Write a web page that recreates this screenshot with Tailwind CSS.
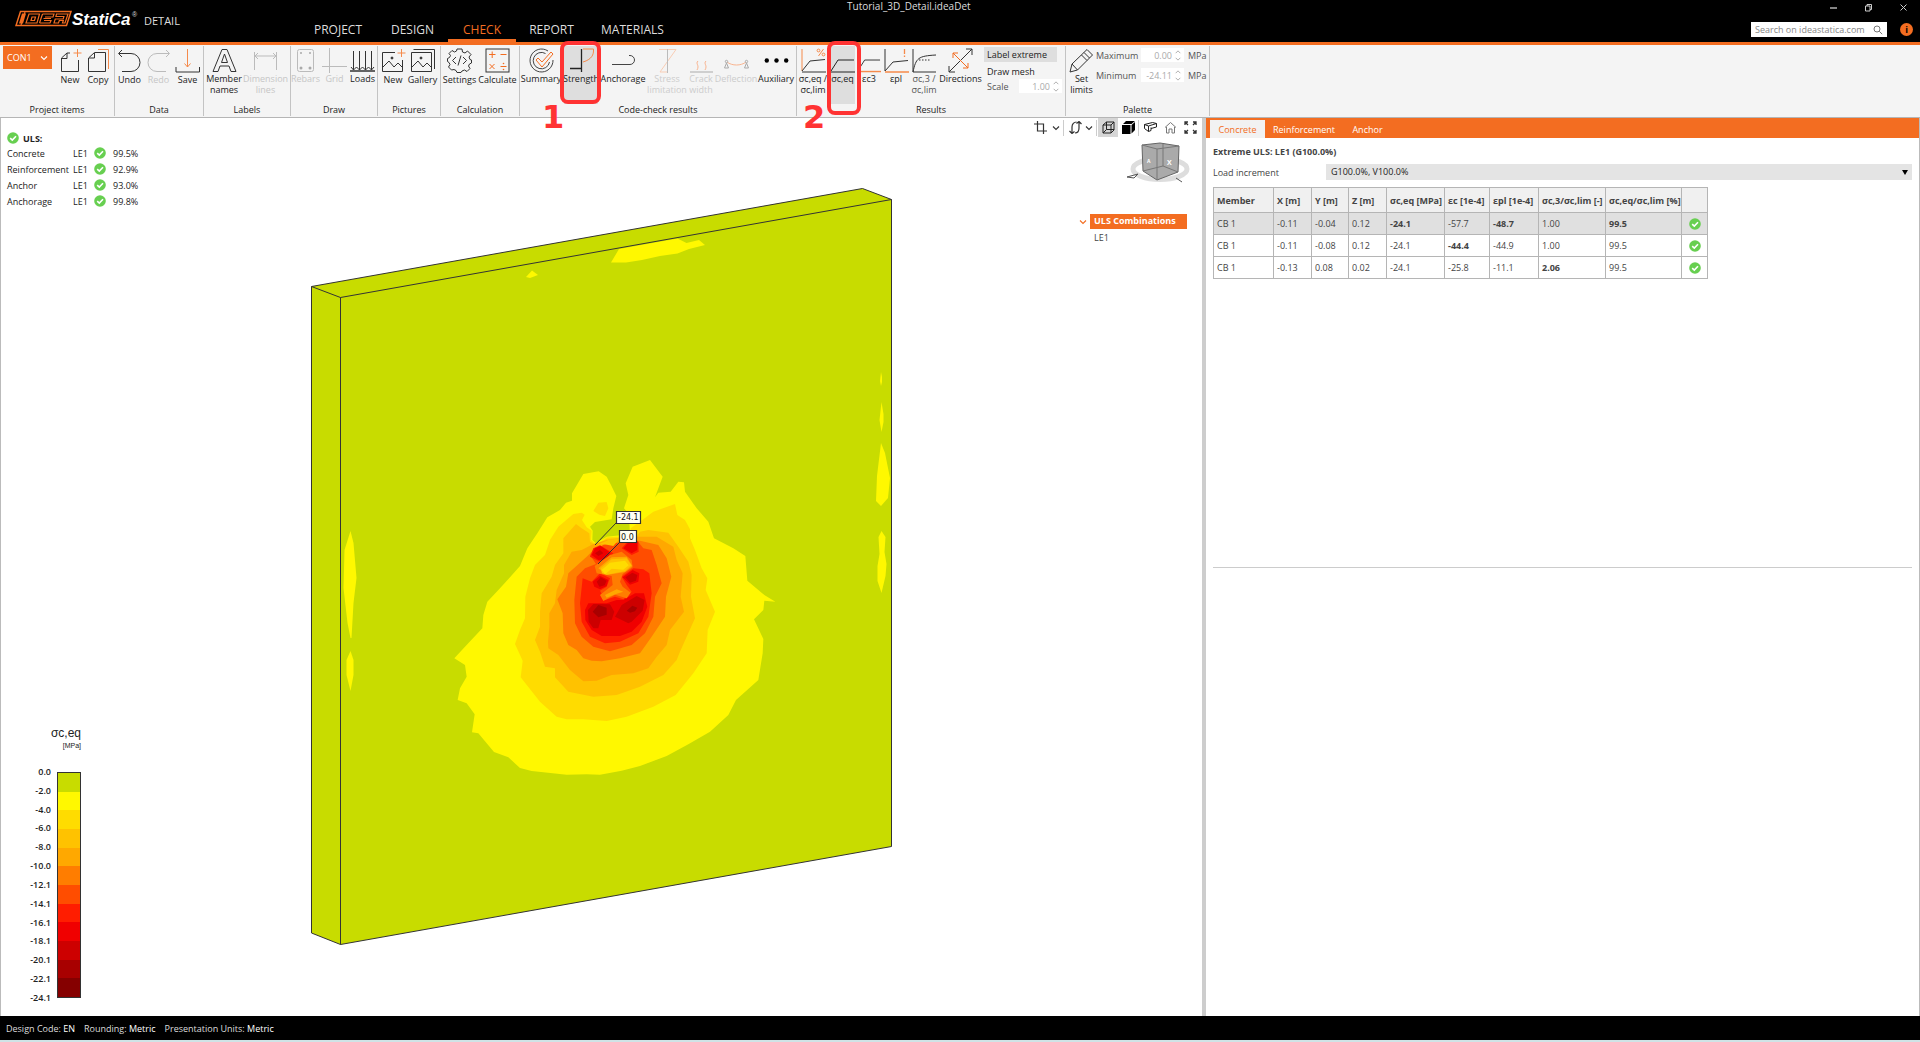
<!DOCTYPE html>
<html lang="en">
<head>
<meta charset="utf-8">
<meta name="viewport" content="width=device-width, initial-scale=1">
<title>Tutorial_3D_Detail.ideaDet</title>
<script src="https://cdn.jsdelivr.net/npm/@tailwindcss/browser@4"></script>
</head>
<body class="relative flex min-h-screen flex-col bg-[#cfe3e6] font-['Open_Sans','Noto_Sans',sans-serif] text-[9px] leading-[11px] text-[#222]">

<svg class="hidden" aria-hidden="true">
  <symbol id="ok" viewBox="0 0 12 12"><circle cx="6" cy="6" r="5.8" fill="#67cf50"/><path d="M3.2 6.2 5.3 8.1 9 4.2" fill="none" stroke="#fff" stroke-width="1.6"/></symbol>
  <symbol id="down" viewBox="0 0 8 8"><path d="M1 2.5 4 5.5 7 2.5" fill="none" stroke="currentColor" stroke-width="1.1"/></symbol>
  <symbol id="spin" viewBox="0 0 8 14"><path d="M1.5 4.5 4 2l2.5 2.5M1.5 9.5 4 12l2.5-2.5" fill="none" stroke="#aaa"/></symbol>
</svg>

<!-- Title bar and main tabs -->
<header class="flex h-[45px] shrink-0 border-b-[3px] border-[#f36d21] bg-black text-[#ddd]">
  <div class="flex items-end">
    <div class="flex h-full w-[299px] items-start pt-[10px] pl-[15px]">
      <svg class="h-[18px] w-[124px]" viewBox="0 0 124 18" role="img" aria-label="IDEA StatiCa">
        <path d="M5.5 1.500H56L51.500 15.500H1z" fill="#000" stroke="#f36d21" stroke-width="1.500"/>
        <g fill="none" stroke="#f36d21" stroke-width="1.200">
          <path d="M7 3.500h4L8 13.500H4z" fill="#f36d21" stroke="none"/>
          <path d="M10 2 6 15"/>
          <path d="M14 4H24.500L22 13H11zM17 7h3.500l-1 3.500H16z"/>
          <path d="M27.500 4H39l-1 3h-8M28.500 8.500H36M24.500 13h10.500l1-2.500h-7M27.500 4l-3 9"/>
          <path d="M41.500 4H53L50 13h-2.500l.8-2.500h-4l-.8 2.500H39l1.200-4h8l.7-2.500h-8z"/>
        </g>
        <text x="57" y="15" fill="#fff" font-family="Liberation Sans, sans-serif" font-size="17" font-weight="700" font-style="italic">StatiCa</text>
        <text x="117" y="7" fill="#ddd" font-family="Liberation Sans, sans-serif" font-size="7">®</text>
      </svg>
      <span class="pl-[5px] pt-[4px] text-[11px] leading-[14px]">DETAIL</span>
    </div>
    <nav class="flex text-center text-[12px] leading-[16px]">
      <a href="#" class="w-[78px] pb-1">PROJECT</a>
      <a href="#" class="w-[71px] pb-1">DESIGN</a>
      <a href="#" class="w-[68px] border-b-[3px] border-[#f36d21] pb-px text-[#f36d21]">CHECK</a>
      <a href="#" class="w-[71px] pb-1">REPORT</a>
      <a href="#" class="w-[91px] pb-1">MATERIALS</a>
    </nav>
  </div>
  <h1 class="flex-1 pl-[169px] text-[10px] leading-[13px]">Tutorial_3D_Detail.ideaDet</h1>
  <div class="flex flex-col items-end">
    <div class="flex h-[14px] items-center gap-[26px] pr-[12px]">
      <button aria-label="Minimize"><svg class="h-[9px] w-[9px]" viewBox="0 0 9 9"><path d="M1 5h7" stroke="#ccc" stroke-width="1.300"/></svg></button>
      <button aria-label="Restore"><svg class="h-[9px] w-[9px]" viewBox="0 0 9 9" fill="none" stroke="#ccc"><path d="M1.500 3h4.500v5H1.500zM3 3V1.500h4.500v5H6"/></svg></button>
      <button aria-label="Close"><svg class="h-[9px] w-[9px]" viewBox="0 0 9 9"><path d="m1.500 1.500 6 6m0-6-6 6" stroke="#ccc"/></svg></button>
    </div>
    <div class="flex items-center gap-[13px] pt-[8px] pr-[7px]">
      <label class="flex h-[15px] w-[136px] items-center bg-white px-1">
        <input class="w-full bg-transparent text-[9px] leading-[11px] text-[#555] outline-none placeholder:text-[#888]" placeholder="Search on ideastatica.com" aria-label="Search on ideastatica.com">
        <svg class="h-[10px] w-[10px] shrink-0" viewBox="0 0 10 10" fill="none" stroke="#777"><circle cx="4" cy="4" r="3"/><path d="m6.200 6.200 3 3"/></svg>
      </label>
      <button aria-label="Info" class="h-[13px] w-[13px] rounded-full bg-[#f36d21] text-[9px] font-bold leading-[13px] text-black">i</button>
    </div>
  </div>
</header>

<!-- Ribbon -->
<div class="flex h-[73px] shrink-0 border-b border-[#b5b5b5] bg-[#f4f4f4] text-center whitespace-nowrap">

  <section class="my-px flex w-[115px] shrink-0 flex-col border-r border-[#c3c3c3]">
    <div class="flex flex-1 pl-[3px]">
      <button class="mr-1 flex h-[23px] w-[49px] items-center justify-between bg-[#f36d21] px-1 text-white">CON1 <svg class="h-2 w-2"><use href="#down"/></svg></button>
      <button class="flex w-7 flex-col items-center pt-[2px]"><svg class="mb-px h-[25px] w-[25px]" viewBox="0 0 25 25" fill="none" stroke="#333"><path d="M20.500 12v11.500h-17V10L9 5v5.500H4M9 5h3"/><path d="M19.500 1v8M15.500 5h8" stroke="#f58a4b"/></svg>New</button>
      <button class="flex w-7 flex-col items-center pt-[2px]"><svg class="mb-px h-[25px] w-[25px]" viewBox="0 0 25 25" fill="none" stroke="#333"><path d="M9 4.500h10.500v19h-17V10L8.500 4.500V10H3"/><path d="M12 1.500h10.500V21" stroke="#f58a4b"/></svg>Copy</button>
    </div>
    <h2 class="pb-px">Project items</h2>
  </section>

  <section class="my-px flex w-[89px] shrink-0 flex-col border-r border-[#c3c3c3]">
    <div class="flex flex-1">
      <button class="flex w-[29px] flex-col items-center pt-[2px]"><svg class="mb-px h-[25px] w-[25px]" viewBox="0 0 25 25" fill="none" stroke="#333"><path d="M5 2 1.500 5.500 5 9M2 5.500h12a9 9 0 0 1 0 18H5"/></svg>Undo</button>
      <button disabled class="flex w-[29px] flex-col items-center pt-[2px] text-[#c6c6c6]"><svg class="mb-px h-[25px] w-[25px]" viewBox="0 0 25 25" fill="none" stroke="#bbb"><path d="m20 2 3.500 3.500L20 9M23 5.500H11a9 9 0 0 0 0 18h9"/></svg>Redo</button>
      <button class="flex w-[29px] flex-col items-center pt-[2px]"><svg class="mb-px h-[25px] w-[25px]" viewBox="0 0 25 25" fill="none" stroke="#333"><path d="M1 19v5h23.500v-5"/><path d="M12.500 1v18M9.500 15.500l3 3.500 3-3.500" stroke="#f58a4b"/></svg>Save</button>
    </div>
    <h2 class="pb-px">Data</h2>
  </section>

  <section class="my-px flex w-[87px] shrink-0 flex-col border-r border-[#c3c3c3]">
    <div class="flex flex-1">
      <button class="flex w-10 flex-col items-center pt-[2px]"><svg class="h-[25px] w-[25px]" viewBox="0 0 25 25" fill="none" stroke="#333"><path d="M1 23.500 10 1.500h5l9 22h-5l-2-5.500H8l-2 5.500zM9.500 14.500h6L12.500 6z"/></svg>Member<br>names</button>
      <button disabled class="flex w-[43px] flex-col items-center pt-[2px] text-[#c6c6c6]"><svg class="h-[25px] w-[25px]" viewBox="0 0 25 25" fill="none" stroke="#bbb"><path d="M1.500 4v18M23.500 4v18M2 8h21M5 5 2 8l3 3M20 5l3 3-3 3"/></svg>Dimension<br>lines</button>
    </div>
    <h2 class="pb-px">Labels</h2>
  </section>

  <section class="my-px flex w-[87px] shrink-0 flex-col border-r border-[#c3c3c3]">
    <div class="flex flex-1">
      <button disabled class="flex w-[29px] flex-col items-center pt-[2px] text-[#c6c6c6]"><svg class="h-[25px] w-[25px]" viewBox="0 0 25 25" fill="none" stroke="#bbb"><rect x="4.500" y="1.500" width="16" height="22" rx="2"/><g fill="#aaa" stroke="none"><circle cx="8" cy="5" r="1"/><circle cx="17" cy="5" r="1"/><circle cx="8" cy="20" r="1.500"/><circle cx="17" cy="20" r="1.500"/></g></svg>Rebars</button>
      <button disabled class="flex w-[29px] flex-col items-center pt-[2px] text-[#c6c6c6]"><svg class="h-[25px] w-[25px]" viewBox="0 0 25 25" stroke="#bbb"><path d="M7.500 0v25M0 18.500h25"/></svg>Grid</button>
      <button class="flex w-[27px] flex-col items-center pt-[2px]"><svg class="h-[25px] w-[25px]" viewBox="0 0 25 25" fill="none" stroke="#333"><path d="M3.500 3v19M9.500 3v19M15.500 3v19M21.500 3v19M1 19l2.500 3 3-3 3 3 3-3 3 3 3-3 3 3 2.500-3"/><path d="M0 23h25" stroke-width="1.500"/></svg>Loads</button>
    </div>
    <h2 class="pb-px">Draw</h2>
  </section>

  <section class="my-px flex w-[63px] shrink-0 flex-col border-r border-[#c3c3c3]">
    <div class="flex flex-1">
      <button class="flex w-[30px] flex-col items-center pt-[2px]"><svg class="mb-px h-[25px] w-[25px]" viewBox="0 0 25 25" fill="none" stroke="#333"><path d="M14 4.500H1.500v19h20V12M2 19l6-6 5 6 4-4 4 4"/><circle cx="11" cy="10" r="1" fill="#333"/><path d="M20.500 1v8M16.500 5h8" stroke="#f58a4b"/></svg>New</button>
      <button class="flex w-[29px] flex-col items-center pt-[2px]"><svg class="mb-px h-[25px] w-[25px]" viewBox="0 0 25 25" fill="none" stroke="#333"><path d="M1.500 4.500h20v19h-20zM3.500 1.500h21V21M2 19l6-6 5 6 4-4 4 4"/><circle cx="11" cy="10" r="1" fill="#333"/></svg>Gallery</button>
    </div>
    <h2 class="pb-px">Pictures</h2>
  </section>

  <section class="my-px flex w-[79px] shrink-0 flex-col border-r border-[#c3c3c3]">
    <div class="flex flex-1">
      <button class="flex w-[37px] flex-col items-center pt-[2px]"><svg class="mb-px h-[25px] w-[25px]" viewBox="0 0 25 25" fill="none" stroke="#333"><path d="M10 1h5l.5 3 2.500 1 2.500-2L24 6.500l-2 2.500 1 2.500 1.500.5v3l-2 1-1 2 1.500 2.500-3 3-2.500-1.500-2.500 1-1 1.500h-4l-1-2-2-1L4.500 22l-3-3L3 16.500l-1-2-1.500-1v-3l2-1 1-2L2 5.500l3-3 2.500 1.500L9.500 3z"/><path d="M9 9 5.500 12.500 9 16M16 9l3.500 3.500L16 16M14 7.500l-3 10"/></svg>Settings</button>
      <button class="flex w-[39px] flex-col items-center pt-[2px]"><svg class="mb-px h-[25px] w-[25px]" viewBox="0 0 25 25" fill="none" stroke="#333"><rect x="1" y="1" width="23" height="23"/><path d="M4 6.500h6.500M7.200 3.500v6.500M15.500 6.500h6M4.500 16l5 5m0-5-5 5M15.500 18.500h6" stroke="#f36d21"/><circle cx="18.500" cy="15.500" r=".8" fill="#f36d21" stroke="none"/><circle cx="18.500" cy="21.500" r=".8" fill="#f36d21" stroke="none"/></svg>Calculate</button>
    </div>
    <h2 class="pb-px">Calculation</h2>
  </section>

  <section class="my-px flex w-[277px] shrink-0 flex-col border-r border-[#c3c3c3]">
    <div class="flex flex-1 gap-[2px]">
      <button class="flex w-[42px] flex-col items-center pt-[2px]"><svg class="h-[25px] w-[25px]" viewBox="0 0 25 25" fill="none" stroke="#444"><path d="M19 3A11.500 11.500 0 1 0 24 12M16.500 5.500A8.200 8.200 0 1 0 20.500 14"/><path d="m7 12 2-2 4 4 9-10 2 2-11 13z" stroke="#f36d21"/></svg>Summary</button>
      <button class="flex w-[34px] flex-col items-center bg-[#dedede] pt-[2px]"><svg class="h-[25px] w-[25px]" viewBox="0 0 25 25" fill="none" stroke="#222"><path d="M14 1h10.500v2c0 6-5 9.500-10.500 11" stroke="#f58a4b"/><path d="M12.500 1v23M1 20.500h11.500" stroke-width="1.300"/></svg>Strength</button>
      <button class="flex w-[46px] flex-col items-center pt-[2px]"><svg class="h-[25px] w-[25px]" viewBox="0 0 25 25" fill="none" stroke="#444"><path d="M1 16.500h18a4.500 4.500 0 0 0 0-9h-1"/></svg>Anchorage</button>
      <button disabled class="flex w-[38px] flex-col items-center pt-[2px] text-[#ccc]"><svg class="h-[25px] w-[25px]" viewBox="0 0 25 25" fill="none"><path d="M4 1.500h17L5 24h7" stroke="#f9cdb4"/><path d="M12.500 1v24" stroke="#bbb"/></svg>Stress<br>limitation</button>
      <button disabled class="flex w-[26px] flex-col items-center pt-[2px] text-[#ccc]"><svg class="h-[25px] w-[25px]" viewBox="0 0 25 25" fill="none"><path d="M9 13c-3 3 2 4-1 9M17 13c-3 3 2 4-1 9" stroke="#f9b48f"/><path d="M1 24h23" stroke="#aaa"/></svg>Crack<br>width</button>
      <button disabled class="flex w-10 flex-col items-center pt-[2px] text-[#ccc]"><svg class="h-[25px] w-[25px]" viewBox="0 0 25 25" fill="none" stroke="#aaa"><path d="M3 14c5 4 14 4 19 0" stroke="#f9b48f"/><circle cx="2.500" cy="13.500" r="1.200"/><circle cx="22.500" cy="13.500" r="1.200"/><path d="m2.500 15-2 5h4zM22.500 15l-2 5h4z"/></svg>Deflection</button>
      <button class="flex w-9 flex-col items-center pt-[2px]"><svg class="h-[25px] w-[25px]" viewBox="0 0 25 25"><circle cx="2.800" cy="12.500" r="2.200"/><circle cx="12.500" cy="12.500" r="2.200"/><circle cx="22.200" cy="12.500" r="2.200"/></svg>Auxiliary</button>
    </div>
    <h2 class="pb-px">Code-check results</h2>
  </section>

  <section class="my-px flex w-[269px] shrink-0 flex-col border-r border-[#c3c3c3]">
    <div class="flex flex-1 gap-[2px] pl-px">
      <button class="flex w-[30px] flex-col items-center pt-[2px]"><svg class="h-[25px] w-[25px]" viewBox="0 0 25 25" fill="none" stroke="#333"><path d="M1 1v22" stroke="#f58a4b"/><path d="M1 23 9 13l15-1.500M1 24h24"/><g stroke="#f58a4b"><path d="m17.500 8 5-7"/><circle cx="17.500" cy="2.500" r="1.400"/><circle cx="22.500" cy="6.500" r="1.400"/></g></svg>σc,eq /<br>σc,lim</button>
      <button class="flex w-[25px] flex-col items-center bg-[#dedede] pt-[2px]"><svg class="h-[25px] w-[25px]" viewBox="0 0 25 25" fill="none" stroke="#222"><path d="m1 23 7-11h16M1 24h24"/></svg>σc,eq</button>
      <button class="flex w-6 flex-col items-center pt-[2px]"><svg class="h-[25px] w-[24px]" viewBox="0 0 25 25" fill="none" stroke="#333"><path d="m1 23 7-11h16"/><path d="M1 24h24" stroke="#f58a4b" stroke-width="1.500"/></svg>εc3</button>
      <button class="flex w-[26px] flex-col items-center pt-[2px]"><svg class="h-[25px] w-[25px]" viewBox="0 0 25 25" fill="none" stroke="#333"><path d="M1 1v22l8-9 15-1.500"/><path d="M1 24h24M20.500 1v5m0 1.500V9" stroke="#f58a4b" stroke-width="1.300"/></svg>εpl</button>
      <button class="flex w-[26px] flex-col items-center pt-[2px] text-[#555]"><svg class="h-[25px] w-[25px]" viewBox="0 0 25 25" fill="none" stroke="#333"><path d="M1 1v23h23M1 24C4 10 6 8 24 7"/><path d="M7 12h11" stroke-dasharray="1.500 1.500"/></svg>σc,3 /<br>σc,lim</button>
      <button class="flex w-[43px] flex-col items-center pt-[2px]"><svg class="h-[25px] w-[25px]" viewBox="0 0 25 25" fill="none" stroke="#333"><path d="m1 24 23-23M18 1h6v6M1 18v6h6"/><path d="m5 5 15 15M5 10V5h5M20 15v5h-5" stroke="#f36d21"/></svg>Directions</button>
      <div class="w-[78px] text-left">
        <button class="mt-px block h-[15px] w-[73px] bg-[#dedede] pl-[3px] text-left">Label extreme</button>
        <button class="mt-1 block pl-[3px]">Draw mesh</button>
        <label class="mt-[2px] flex items-center justify-between pl-[3px] text-[#555]">Scale
          <span class="flex h-[14px] w-[43px] items-center bg-white"><input class="w-full bg-transparent text-right text-[9px] text-[#aaa]" value="1.00"><svg class="mx-[2px] h-[13px] w-2 shrink-0"><use href="#spin"/></svg></span></label>
      </div>
    </div>
    <h2 class="pb-px">Results</h2>
  </section>

  <section class="my-px flex w-[144px] shrink-0 flex-col border-r border-[#c3c3c3]">
    <div class="flex flex-1 pl-px">
      <button class="flex w-[29px] flex-col items-center pt-[2px]"><svg class="h-[25px] w-[25px]" viewBox="0 0 25 25" fill="none" stroke="#333"><path d="m1 24 2-8L18 1.500 23.500 7 8.500 22zM3 16l5.500 6M15 4.500l5.500 5.500M12.500 7l5.500 5.500"/></svg>Set<br>limits</button>
      <div class="flex flex-col gap-[6px] pt-[2px] text-[#555]">
        <label class="flex h-[14px] items-center"><span class="w-[45px] text-left">Maximum</span><span class="mr-1 flex h-[14px] w-[43px] items-center bg-white"><input class="w-full bg-transparent text-right text-[9px] text-[#aaa]" value="0.00"><svg class="mx-[2px] h-[13px] w-2 shrink-0"><use href="#spin"/></svg></span>MPa</label>
        <label class="flex h-[14px] items-center"><span class="w-[45px] text-left">Minimum</span><span class="mr-1 flex h-[14px] w-[43px] items-center bg-white"><input class="w-full bg-transparent text-right text-[9px] text-[#aaa]" value="-24.11"><svg class="mx-[2px] h-[13px] w-2 shrink-0"><use href="#spin"/></svg></span>MPa</label>
      </div>
    </div>
    <h2 class="pb-px">Palette</h2>
  </section>
</div>

<main class="grid flex-1 grid-cols-[1202fr_4px_714fr] bg-white">

  <!-- 3D view -->
  <section class="relative border-l border-[#bbb]">
    <svg class="absolute inset-0 h-full w-full" viewBox="1 118 1201 898" role="img" aria-label="Concrete stress on the wall">
      <path d="M311.500 286.500 862.500 188.500 891.500 199.500V846.500L340.500 944.500 311.500 933z" fill="#c8dc00"/>
      <g fill="#fff800">
        <path d="M611 262.500 619 249 677.500 238.500 686.500 243 699 240 705 245 689 249 677.500 253.500 660 256 642 260 626 262.500z"/>
        <path d="m526 277 6-6.500 6 4.500-8 3z"/>
        <path d="m350.500 531 3 12 3 35-3 25-2 35h-1l-3-15-4-35 1-38z"/>
        <path d="m350.500 651 3 9v15l-3 16-4-16v-15z"/>
        <path d="m881 372 1 5v5l-1 4-1-5zM881.500 402l2 12v8l-2 10-2-12zM881 443l4 10 5 25-2 20-7 8-5-5 1-25zM881.500 531l4 6-1 15 2 12-1 12-4 17-4-12v-15l2-12-1-17z"/>
      </g>
      <path d="M340.500 944.500V297.500L311.500 286.500M340.500 297.500 891.500 199.500M311.500 286.500 862.500 188.500 891.500 199.500V846.500L340.500 944.500 311.500 933z" fill="none" stroke="#333" stroke-width="1"/>
      <!-- Stress isobands, drawn at three units to the pixel -->
      <g transform="translate(440 440) scale(.333333)">
        <path fill="#fff800" d="M43 655 75 620 127 565 130 525 142 485 180 445 240 378 262 325 292 280 322 232 360 210 378 188 396 182V160L430 102 476 94 500 110 513 135 529 168 520 205 515 238 465 246 450 260 458 272 457 300 468 310 500 290 570 283 568 250 570 225 552 205 565 165 557 130 578 80 630 60 668 110 645 172 655 158 692 155 715 125 732 127 735 155 770 205 805 245 822 295 880 325 916 348 922 422 973 465 1006 485 973 482 970 510 942 538 970 597 968 640 955 720 888 780 865 825 810 875 745 913 680 948 600 978 545 992 480 1004 440 1003 380 1004 275 993 240 984 205 952 162 936 115 880 96 877 104 823 80 790 53 780 60 745 80 710 75 675z"/>
        <path fill="#ffdc00" d="M225 612 240 570 255 535 256 470 270 415 285 375 315 345 330 300 355 260 400 222 425 218 434 224 426 240 440 262 455 272 453 300 468 314 500 292 570 288 572 265 600 245 640 215 705 192 712 225 735 240 750 268 750 295 765 330 785 385 802 415 797 450 825 515 803 570 800 640 760 700 707 765 640 800 560 830 500 843 430 838 380 838 350 830 300 785 242 712 248 662zM460 213 475 188 500 186 505 205 495 228 478 224z"/>
        <path fill="#ffc200" d="M285 600 300 560V515L305 460 335 410 345 375 370 340V295L408 252 425 265 448 280 450 305 468 316 500 296 590 290 600 275 625 270 685 278 715 320 745 365 755 405 753 470 765 535 740 590 720 635 710 660 670 705 600 740 530 765 460 770 385 755 345 712 345 685 315 680 300 635z"/>
        <path fill="#ffa800" d="M324 605 328 560 328 520 345 490 350 450 372 400 372 375 395 335 425 330 460 312 500 300 590 290 650 290 700 320 710 360 728 400 722 470 732 515 690 570 680 615 650 650 625 685 580 700 515 705 470 722 430 724 390 690 355 645 325 625z"/>
        <path fill="#ff7d00" d="M352 478 378 440 385 400 440 350 460 330 500 310 600 302 655 315 680 355 694 410 678 470 675 530 635 590 600 640 540 655 485 664 455 662 430 655 410 630 385 615 370 580 368 520z"/>
        <path fill="#ff4d00" d="M403 480 410 410 435 385 468 372 450 345 490 315 590 300 610 325 635 330 650 375 665 430 645 470 640 530 615 580 575 615 510 634 460 620 425 590 405 550z"/>
        <path fill="#ff1d00" d="M420 490 428 415 455 425 480 400 510 415 500 440 480 452 495 480 525 470 550 478 575 455 560 435 545 410 580 385 610 388 628 400 635 460 625 530 595 580 540 605 495 610 450 590 425 545zM450 350 460 325 480 316 520 340 505 362 480 365zM545 325 565 302 595 305 596 335 575 345z"/>
        <path fill="#f00000" d="M435 510 445 490 500 490 530 480 550 480 585 460 612 460 622 500 605 545 575 575 540 588 485 588 455 570 436 540zM455 345 465 325 482 318 512 338 500 358 475 360zM550 325 566 306 592 307 592 330 575 340zM458 425 480 407 505 420 500 438 480 448 463 440zM548 412 578 390 598 400 595 425 570 434z"/>
        <path fill="#cd0000" d="M444 510 460 492 510 493 523 515 515 540 482 540 475 565 460 565 446 545zM525 530 545 495 590 468 614 480 608 512 575 545 565 550 545 540zM470 425 482 412 500 422 494 436 478 440zM556 412 577 398 592 405 588 422 570 428zM465 340 480 330 490 340 475 348z"/>
        <path fill="#a80000" d="M458 515 475 495 500 503 500 524 475 532zM560 512 577 497 592 503 585 514 570 518z"/>
        <path fill="#ff7d00" d="M464 378 510 345 545 335 575 360 578 382 548 402 540 425 548 440 572 458 560 475 525 464 490 483 480 465 518 435 515 408 470 400z"/>
        <path fill="#ffa800" d="M475 385 515 352 560 350 577 378 555 396 500 405zM495 465 530 448 550 455 530 461 500 473z"/>
        <path fill="#ffc200" d="M482 385 515 358 560 355 574 376 555 393 500 404 486 400zM470 316 505 300 540 295 520 318 490 312z"/>
        <path fill="#ffdc00" d="M485 390 510 368 555 362 566 376 550 389 515 386 495 403z"/>
      </g>
      <g stroke="#333" fill="#fffff4">
        <path d="m595 545 21-22M598 564l21-21"/>
        <path d="M616.500 511.500h24v12h-24zM619.500 530.500h17v12h-17z" stroke-width="1.200"/>
      </g>
      <g font-family="DejaVu Sans, sans-serif" font-size="8" fill="#111"><text x="618" y="520">-24.1</text><text x="621" y="540">0.0</text></g>
    </svg>

    <table class="absolute left-[6px] top-[14px] border-collapse text-left">
      <caption class="h-[13px] text-left font-bold"><span class="flex items-center gap-1"><svg class="h-3 w-3"><use href="#ok"/></svg>ULS:</span></caption>
      <tbody>
        <tr class="h-4"><td class="w-[66px]">Concrete</td><td class="w-[21px]">LE1</td><td class="w-[19px]"><svg class="h-3 w-3"><use href="#ok"/></svg></td><td>99.5%</td></tr>
        <tr class="h-4"><td>Reinforcement</td><td>LE1</td><td><svg class="h-3 w-3"><use href="#ok"/></svg></td><td>92.9%</td></tr>
        <tr class="h-4"><td>Anchor</td><td>LE1</td><td><svg class="h-3 w-3"><use href="#ok"/></svg></td><td>93.0%</td></tr>
        <tr class="h-4"><td>Anchorage</td><td>LE1</td><td><svg class="h-3 w-3"><use href="#ok"/></svg></td><td>99.8%</td></tr>
      </tbody>
    </table>

    <!-- View tools -->
    <div class="absolute right-0 top-0 flex flex-col items-end">
      <div class="flex h-[19px] items-center text-[#333]">
        <button aria-label="Crop" class="w-[18px]"><svg class="h-[13px] w-[13px]" viewBox="0 0 13 13" fill="none" stroke="currentColor" stroke-width="1.200"><path d="M3.500 0v10H13M0 3h9.500v10"/></svg></button>
        <button aria-label="Crop options" class="w-[11px]"><svg class="h-2 w-2"><use href="#down"/></svg></button>
        <span class="mr-[5px] h-4 w-px bg-[#ccc]"></span>
        <button aria-label="Rotate" class="w-4"><svg class="h-[13px] w-[13px]" viewBox="0 0 13 13" fill="none" stroke="currentColor" stroke-width="1.200"><path d="M5.500 10.500 3 12.500.5 10M3 12V6c0-3 2-5 4.500-5M7.500 2.500 10 .5 12.500 3M10 1v6c0 3-1.500 5-4 5"/></svg></button>
        <button aria-label="Rotate options" class="w-[11px]"><svg class="h-2 w-2"><use href="#down"/></svg></button>
        <span class="mr-px h-4 w-px bg-[#ccc]"></span>
        <button aria-label="Transparent" class="flex h-[19px] w-5 items-center justify-center bg-[#d6d6d6]"><svg class="h-[13px] w-[13px]" viewBox="0 0 13 13" fill="none" stroke="#222"><path d="M1 4h8v8H1zM1 4l3.500-3H12L9 4M12 1v8l-3 3M4.500 1v7.500L1 12M4.500 8.500H12"/></svg></button>
        <button aria-label="Solid" class="flex w-5 justify-center"><svg class="h-[13px] w-[13px]" viewBox="0 0 13 13"><path d="M0 4h8.500v9H0zM1 3l3-3h9L9.500 3zM9.500 4 13 1v8l-3.500 3.500z"/></svg></button>
        <span class="h-4 w-px bg-[#ccc]"></span>
        <button aria-label="Section" class="flex w-[23px] justify-center"><svg class="h-[13px] w-[13px]" viewBox="0 0 13 13" fill="none" stroke="#222"><path d="m.5 3.500 8-2 4 1-8 2.500zM.5 3.500v4l4 3V5M4.500 10.500l2.500-1V6.500M7 7.500l5.500-1.500V2.500"/></svg></button>
        <button aria-label="Home" class="flex w-4 justify-center"><svg class="h-[13px] w-[13px]" viewBox="0 0 13 13" fill="none" stroke="#777"><path d="m1 6.500 5.500-5L12 6.500M2.500 6v6H5V8h3v4h2.500V6"/></svg></button>
        <button aria-label="Fit view" class="flex w-6 justify-center"><svg class="h-[13px] w-[13px]" viewBox="0 0 13 13" fill="none" stroke="#333" stroke-width="1.300"><path d="M1 4V1h3M1 1l3 3M9 1h3v3M12 1 9 4M1 9v3h3M1 12l3-3M12 9v3H9M12 12 9 9"/></svg></button>
      </div>
      <svg class="mt-[5px] mr-[10px] h-[42px] w-[66px]" viewBox="0 0 66 42" role="img" aria-label="View cube">
        <ellipse cx="34" cy="27" rx="27" ry="10.500" fill="none" stroke="#ddd" stroke-width="5"/>
        <path d="m16 3 18-2 19 3-1 26-21 8-14-9z" fill="#aaa" stroke="#666"/>
        <path d="M16 3 31 7l22-3M31 7v31M37 2v22l15 6M37 24l-20 5" fill="none" stroke="#777"/>
        <path d="m1 35 11-3-4 4zM50 36l6 4" fill="none" stroke="#555"/>
        <text x="21" y="21" font-size="5" font-weight="700" fill="#fff">A</text><text x="41" y="23" font-size="7" font-weight="700" fill="#fff">X</text>
      </svg>
      <div class="mr-[15px] mt-[30px] w-[108px]">
        <button class="flex w-full items-center gap-[3px] text-[#f36d21]"><svg class="h-2 w-2"><use href="#down"/></svg><span class="h-[15px] flex-1 bg-[#f36d21] pl-1 text-left font-bold leading-[14px] text-white">ULS Combinations</span></button>
        <button class="mt-[3px] block pl-[15px] text-[#444]">LE1</button>
      </div>
    </div>

    <!-- Colour scale -->
    <div class="absolute bottom-3 left-[30px] flex w-[50px] flex-col items-end">
      <div class="font-['Liberation_Sans',sans-serif] text-[12px] leading-[14px]">σc,eq</div>
      <div class="mb-[15px] font-['Liberation_Sans',sans-serif] text-[7px] leading-[11px]">[MPa]</div>
      <div class="flex gap-[6px]">
        <ol class="flex h-[238px] flex-col justify-between text-right font-semibold leading-3">
          <li>0.0</li><li>-2.0</li><li>-4.0</li><li>-6.0</li><li>-8.0</li><li>-10.0</li><li>-12.1</li><li>-14.1</li><li>-16.1</li><li>-18.1</li><li>-20.1</li><li>-22.1</li><li>-24.1</li>
        </ol>
        <div class="my-[6px] flex w-6 flex-col border border-[#333]">
          <i class="flex-1 bg-[#c8dc00]"></i><i class="flex-1 bg-[#fff800]"></i><i class="flex-1 bg-[#ffdc00]"></i><i class="flex-1 bg-[#ffc200]"></i><i class="flex-1 bg-[#ffa800]"></i><i class="flex-1 bg-[#ff7d00]"></i><i class="flex-1 bg-[#ff4d00]"></i><i class="flex-1 bg-[#ff1d00]"></i><i class="flex-1 bg-[#f00000]"></i><i class="flex-1 bg-[#cd0000]"></i><i class="flex-1 bg-[#a80000]"></i><i class="flex-1 bg-[#850000]"></i>
        </div>
      </div>
    </div>
  </section>

  <div class="bg-[#cdcdcd]"></div>

  <!-- Results -->
  <section class="flex flex-col border-r border-[#bbb] text-[#444]">
    <div class="flex h-5 items-end bg-[#f36d21] pl-1 text-white">
      <button class="h-[18px] w-[55px] bg-[#f2f2f2] text-[#f36d21]">Concrete</button>
      <button class="h-[18px] w-[78px]">Reinforcement</button>
      <button class="h-[18px] w-[49px]">Anchor</button>
    </div>
    <div class="flex flex-col px-[7px]">
      <h2 class="mt-2 font-bold">Extreme ULS: LE1 (G100.0%)</h2>
      <div class="mt-[7px] flex h-4 items-center">
        <label for="inc" class="w-[113px]">Load increment</label>
        <div class="relative flex-1">
          <select id="inc" class="block h-4 w-full appearance-none bg-[#e4e4e4] pl-[5px] text-[9px] leading-[16px] text-[#222]"><option>G100.0%, V100.0%</option></select>
          <svg class="pointer-events-none absolute right-1 top-[6px] h-[5px] w-[6px]" viewBox="0 0 6 5"><path d="M0 0h6L3 5z"/></svg>
        </div>
      </div>
      <table class="mt-[7px] w-[494px] table-fixed border-collapse border border-[#999] text-left">
        <colgroup><col class="w-[60px]"><col class="w-[38px]"><col class="w-[37px]"><col class="w-[38px]"><col class="w-[58px]"><col class="w-[45px]"><col class="w-[49px]"><col class="w-[67px]"><col class="w-[76px]"><col class="w-[26px]"></colgroup>
        <thead>
          <tr class="h-[25px] whitespace-nowrap bg-[#f0f0f0] [&>th]:border [&>th]:border-[#b5b5b5] [&>th]:pl-[3px]"><th>Member</th><th>X [m]</th><th>Y [m]</th><th>Z [m]</th><th>σc,eq [MPa]</th><th>εc [1e-4]</th><th>εpl [1e-4]</th><th>σc,3/σc,lim [-]</th><th>σc,eq/σc,lim [%]</th><th></th></tr>
        </thead>
        <tbody class="[&>tr]:h-[22px] [&_td]:border [&_td]:border-[#b5b5b5] [&_td]:pl-[3px]">
          <tr class="bg-[#e0e0e0]"><td>CB 1</td><td>-0.11</td><td>-0.04</td><td>0.12</td><td><b>-24.1</b></td><td>-57.7</td><td><b>-48.7</b></td><td>1.00</td><td><b>99.5</b></td><td><svg class="ml-1 h-3 w-3"><use href="#ok"/></svg></td></tr>
          <tr><td>CB 1</td><td>-0.11</td><td>-0.08</td><td>0.12</td><td>-24.1</td><td><b>-44.4</b></td><td>-44.9</td><td>1.00</td><td>99.5</td><td><svg class="ml-1 h-3 w-3"><use href="#ok"/></svg></td></tr>
          <tr><td>CB 1</td><td>-0.13</td><td>0.08</td><td>0.02</td><td>-24.1</td><td>-25.8</td><td>-11.1</td><td><b>2.06</b></td><td>99.5</td><td><svg class="ml-1 h-3 w-3"><use href="#ok"/></svg></td></tr>
        </tbody>
      </table>
      <hr class="mt-72 border-[#ccc]">
    </div>
  </section>
</main>

<footer class="mb-[2px] flex h-6 shrink-0 items-center gap-[9px] bg-black pl-[6px] text-[#ddd]">
  <span>Design Code: <b class="font-medium text-white">EN</b></span><span>Rounding: <b class="font-medium text-white">Metric</b></span><span>Presentation Units: <b class="font-medium text-white">Metric</b></span>
</footer>

<!-- Step markers lying over the ribbon -->
<div class="pointer-events-none absolute left-[560px] top-[41px] h-[63px] w-[41px] rounded-[8px] border-4 border-[#ff3333]"></div>
<div class="pointer-events-none absolute left-[827px] top-[41px] h-[74px] w-[34px] rounded-[8px] border-4 border-[#ff3333]"></div>
<div class="pointer-events-none absolute left-[542px] top-[101px] font-['DejaVu_Sans',sans-serif] text-[32px] font-bold leading-8 text-[#ff3333]">1</div>
<div class="pointer-events-none absolute left-[803px] top-[101px] font-['DejaVu_Sans',sans-serif] text-[32px] font-bold leading-8 text-[#ff3333]">2</div>
</body>
</html>
